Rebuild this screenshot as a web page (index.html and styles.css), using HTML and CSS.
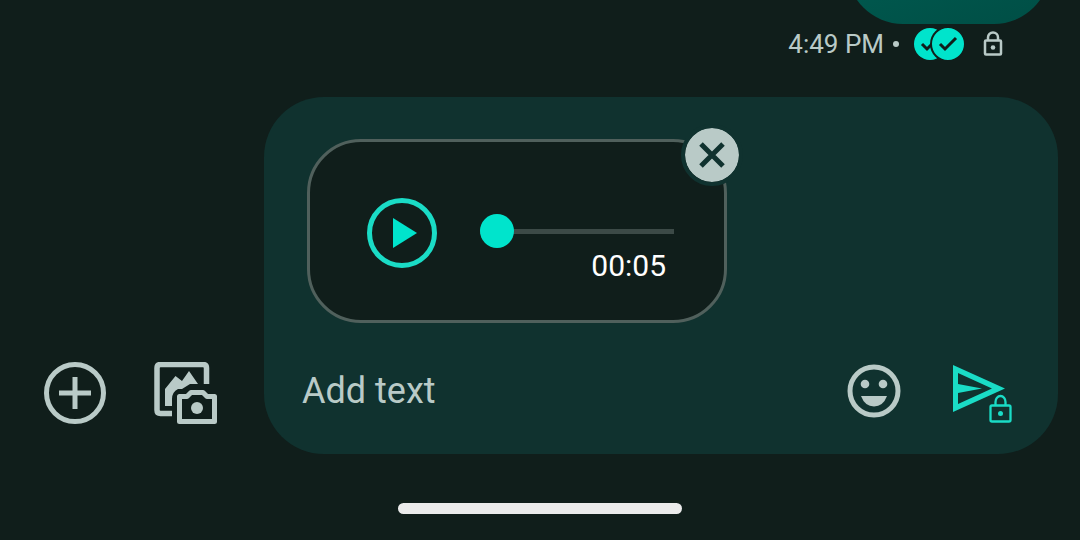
FILE: index.html
```html
<!DOCTYPE html>
<html lang="en">
<head>
    <meta charset="UTF-8" />
    <meta name="viewport" content="width=device-width, initial-scale=1.0"/>
    <title>Messages</title>
    <link rel="stylesheet" href="styles.css">
</head>
<body>
    <main class="chat">
        <section class="thread">
            <div class="bubble"></div>
            <div class="status">
                <span>4:49 PM</span>
                <span class="dot"></span>
                <svg class="read-icon" viewBox="0 0 50 32" role="img" aria-label="Read">
                    <circle cx="16" cy="16" r="16" fill="#00e4cc"/>
                    <path d="M8 16l5 5L24 10" fill="none" stroke="#101e1b" stroke-width="3"/>
                    <circle cx="34" cy="16" r="17" fill="#00e4cc" stroke="#101e1b" stroke-width="2"/>
                    <path d="M26 16l5 5L42 10" fill="none" stroke="#101e1b" stroke-width="3"/>
                </svg>
                <svg class="lock-icon" viewBox="0 0 20 26" role="img" aria-label="Encrypted">
                    <rect x="2" y="9.500" width="16" height="14" rx="1" fill="none" stroke="currentColor" stroke-width="2.500"/>
                    <path d="M5 9V6.500a5 5 0 0 1 10 0V9" fill="none" stroke="currentColor" stroke-width="2.500"/>
                    <circle cx="10" cy="16.500" r="2.300" fill="currentColor"/>
                </svg>
            </div>
        </section>

        <form class="composer">
            <div class="tools">
                <button type="button" class="icon-btn" aria-label="Add attachment">
                    <svg width="62" height="62" viewBox="0 0 62 62" fill="none" stroke="currentColor" stroke-width="5">
                        <circle cx="31" cy="31" r="28.5"/>
                        <path d="M31 15v32M15 31h32"/>
                    </svg>
                </button>
                <button type="button" class="icon-btn" aria-label="Gallery and camera">
                    <svg width="63" height="62" viewBox="0 0 63 62" fill="none">
                        <path d="M18 51.500H6.500Q3 51.500 3 48V6Q3 2.500 6.500 2.500H49Q52.500 2.500 52.500 6V22" stroke="currentColor" stroke-width="5.500"/>
                        <path d="M11 44V27L21.500 14l6.500 5 7-10 9 13h-8l-8 5h-4q-6 3-6 10v7z" fill="currentColor"/>
                        <path d="M25.500 34.500H33l4-4h12l4 4h7.500v25h-35z" stroke="currentColor" stroke-width="5" stroke-linejoin="round"/>
                        <circle cx="43" cy="46" r="6" fill="currentColor"/>
                    </svg>
                </button>
            </div>

            <div class="panel">
                <div class="voice-note">
                    <button type="button" class="play-btn" aria-label="Play">
                        <svg width="70" height="70" viewBox="0 0 70 70">
                            <circle cx="35" cy="35" r="32.500" fill="none" stroke="currentColor" stroke-width="5"/>
                            <path d="M26 20v30l24-15z" fill="#00e4cc"/>
                        </svg>
                    </button>
                    <div class="player">
                        <input type="range" class="seek" min="0" max="5" value="0" aria-label="Seek">
                        <span class="time">00:05</span>
                    </div>
                    <button type="button" class="close-btn" aria-label="Remove recording">
                        <svg width="26" height="26" viewBox="0 0 26 26">
                            <path d="M2 2l22 22M24 2L2 24" stroke="currentColor" stroke-width="5"/>
                        </svg>
                    </button>
                </div>

                <div class="text-row">
                    <input type="text" class="message" placeholder="Add text" aria-label="Add text">
                    <button type="button" class="icon-btn" aria-label="Emoji">
                        <svg width="54" height="54" viewBox="0 0 54 54">
                            <circle cx="27" cy="27" r="24" fill="none" stroke="currentColor" stroke-width="5"/>
                            <circle cx="18" cy="20" r="4.300" fill="currentColor"/>
                            <circle cx="36" cy="20" r="4.300" fill="currentColor"/>
                            <path d="M14 32h26q-4 10.500-13 10.500T14 32z" fill="currentColor"/>
                        </svg>
                    </button>
                    <button type="submit" class="icon-btn send-btn" aria-label="Send encrypted">
                        <svg width="60" height="64" viewBox="0 0 60 64">
                            <path d="M0 6v47l52-23.500zM5 14l34 15.500L5 45V34l24-4.500L5 25z" fill="currentColor" fill-rule="evenodd"/>
                            <path d="M42 46v-4a5 6 0 0 1 10 0v4" fill="none" stroke="#10322f" stroke-width="6"/>
                            <rect x="37.500" y="46.500" width="20" height="16" rx="1.500" fill="#10322f" stroke="currentColor" stroke-width="2.300"/>
                            <path d="M42.500 46v-3a5 6 0 0 1 10 0v3" fill="none" stroke="currentColor" stroke-width="2.300"/>
                            <circle cx="47.500" cy="54.500" r="2.500" fill="currentColor"/>
                        </svg>
                    </button>
                </div>
            </div>
        </form>

        <div class="home-bar"></div>
    </main>
</body>
</html>
```
FILE: styles.css
```css
* {
    box-sizing: border-box;
}
body {
    margin: 0;
    background: #101e1b;
    color: #b9cac7;
    font-family: Roboto, sans-serif;
}
.chat {
    display: flex;
    flex-direction: column;
    overflow: hidden;
}
.thread {
    display: flex;
    flex-direction: column;
    align-items: flex-end;
    margin-bottom: 33px;
}
.bubble {
    width: 203px;
    height: 124px;
    margin: -100px 30px 0 0;
    border-radius: 56px;
    background: linear-gradient(160deg, #006055, #004e45);
}
.status {
    display: flex;
    align-items: center;
    height: 40px;
    padding-right: 77px;
    font-size: 26px;
}
.dot {
    width: 6px;
    height: 6px;
    margin-left: 9px;
    border-radius: 50%;
    background: #b9cac7;
}
.read-icon {
    width: 50px;
    height: 32px;
    margin: 0 19px 0 15px;
}
.lock-icon {
    width: 20px;
    height: 26px;
}
.composer {
    display: flex;
    align-items: flex-end;
    padding-right: 22px;
}
.tools {
    display: flex;
    gap: 48px;
    padding: 0 47px 30px 44px;
}
.icon-btn {
    display: flex;
    flex-shrink: 0;
    padding: 0;
    border: none;
    background: none;
    color: #b9cac7;
    cursor: pointer;
}
.panel {
    flex: 1;
    min-width: 0;
    padding: 42px 45px 31px 38px;
    border-radius: 60px;
    background: #10322f;
}
.voice-note {
    position: relative;
    display: flex;
    align-items: center;
    width: 420px;
    max-width: 100%;
    height: 184px;
    margin-left: 5px;
    padding: 4px 50px 0 57px;
    border: 3px solid #50605c;
    border-radius: 54px;
    background: #101e1b;
}
.play-btn {
    display: flex;
    padding: 0;
    border: none;
    background: none;
    color: #1adcc6;
    cursor: pointer;
}
.player {
    flex: 1;
    display: flex;
    flex-direction: column;
    min-width: 0;
    margin-left: 43px;
    padding-top: 32px;
}
.seek {
    appearance: none;
    width: 100%;
    height: 34px;
    margin: 0;
    background: linear-gradient(#3c4a47, #3c4a47) center / 100% 5px no-repeat;
}
.seek::-webkit-slider-thumb {
    appearance: none;
    width: 34px;
    height: 34px;
    border-radius: 50%;
    background: #00e4cc;
}
.time {
    padding-right: 8px;
    color: #ffffff;
    font-size: 30px;
    line-height: 36px;
    text-align: right;
}
.close-btn {
    position: absolute;
    top: -18px;
    right: -19px;
    display: flex;
    align-items: center;
    justify-content: center;
    width: 62px;
    height: 62px;
    padding: 0;
    border: 4px solid #10322f;
    border-radius: 50%;
    background: #b9cac7;
    background-clip: padding-box;
    color: #10322f;
    cursor: pointer;
}
.text-row {
    display: flex;
    align-items: center;
    height: 64px;
    margin-top: 36px;
}
.message {
    flex: 1;
    min-width: 0;
    padding: 0;
    border: none;
    outline: none;
    background: none;
    color: #ffffff;
    font-family: inherit;
    font-size: 36px;
}
.message::placeholder {
    color: #b9cac7;
}
.send-btn {
    margin-left: 52px;
    color: #1adcc6;
}
.home-bar {
    width: 284px;
    height: 11px;
    margin: 49px auto 0;
    border-radius: 6px;
    background: #ebebeb;
}
```
